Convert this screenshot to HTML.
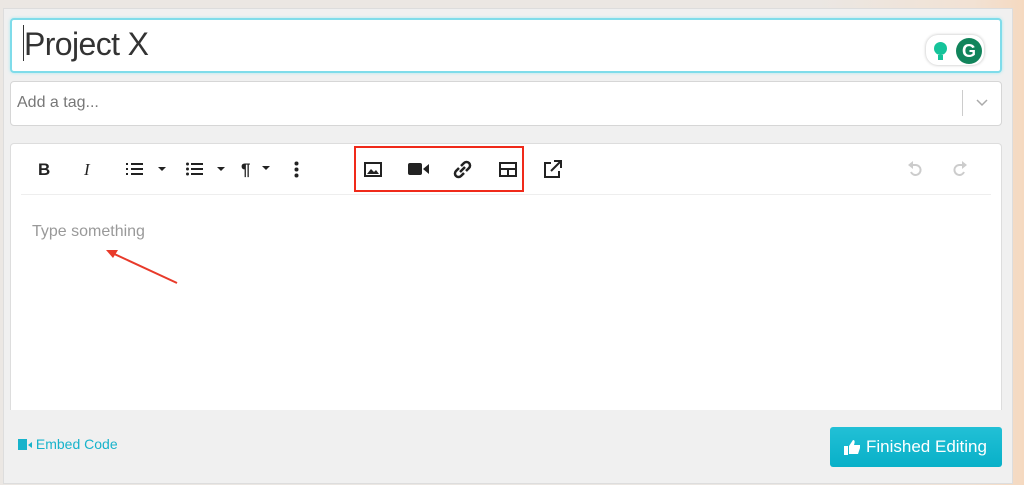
<!DOCTYPE html>
<html><head><style>
body{margin:0;width:1024px;height:485px;background:linear-gradient(90deg,#ebe7e3 0%,#ebe7e3 80%,#f2e2d4 95%,#f5d9c0 100%);font-family:"Liberation Sans",sans-serif;position:relative;overflow:hidden}
.panel{position:absolute;left:3px;top:8px;width:1008px;height:474px;background:#f0f0f0;border:1px solid #ddd}
.abs{position:absolute}
.title{left:10px;top:18px;width:988px;height:51px;background:#fff;border:2px solid #7fdcea;border-radius:4px;box-shadow:0 0 3px #a8e8f0}
.tag{left:10px;top:81px;width:990px;height:43px;background:#fff;border:1px solid #d6d6d6;border-radius:4px}
.ed{left:10px;top:143px;width:990px;height:266px;background:#fff;border:1px solid #ddd;border-bottom:none;border-radius:4px 4px 0 0}
.ic{position:absolute;top:160px;font-size:17px;color:#222}
.btn{left:830px;top:427px;width:172px;height:40px;background:linear-gradient(#22c0d6,#08b0c8);border-radius:3px;color:#fff;font-size:17px;line-height:40px}
</style></head><body>
<div class="panel"></div>
<div class="abs title"><div class="abs" style="left:11px;top:5px;width:1px;height:36px;background:#333"></div>
<div class="abs" style="left:12px;top:6px;font-size:32px;color:#333;letter-spacing:-0.6px">Project X</div>
<div class="abs" style="left:914px;top:15px;width:58px;height:30px;background:#fff;border-radius:12px;box-shadow:0 0 3px #bbb"></div>
<div class="abs" style="left:922px;top:22px;width:13px;height:13px;border-radius:50%;background:#15c39a"></div>
<div class="abs" style="left:926px;top:35px;width:5px;height:5px;background:#15c39a"></div>
<div class="abs" style="left:944px;top:18px;width:26px;height:26px;border-radius:50%;background:#11845b;color:#fff;font-weight:bold;font-size:18px;text-align:center;line-height:26px">G</div>
</div>
<div class="abs tag"><div class="abs" style="left:6px;top:12px;font-size:16px;color:#777">Add a tag...</div>
<div class="abs" style="left:951px;top:8px;width:1px;height:26px;background:#ccc"></div>
<svg class="abs" style="left:965px;top:17px" width="12" height="8"><path d="M1 1L6 6L11 1" fill="none" stroke="#aaa" stroke-width="1.5"/></svg></div>
<div class="abs ed"><div class="abs" style="left:10px;top:50px;width:970px;height:1px;background:#eee"></div>
<div class="abs" style="left:21px;top:79px;font-size:16px;color:#999">Type something</div></div>
<div class="ic" style="left:38px;font-weight:bold">B</div>
<div class="ic" style="left:84px;font-style:italic;font-family:'Liberation Serif'">I</div>
<svg class="abs" style="left:126px;top:162px" width="44" height="14"><g fill="#222"><rect x="0" y="1" width="2" height="2"/><rect x="0" y="6" width="2" height="2"/><rect x="0" y="11" width="2" height="2"/><rect x="5" y="1" width="12" height="2"/><rect x="5" y="6" width="12" height="2"/><rect x="5" y="11" width="12" height="2"/><path d="M32 5H40L36 9Z"/></g></svg>
<svg class="abs" style="left:186px;top:162px" width="44" height="14"><g fill="#222"><circle cx="1.5" cy="2" r="1.5"/><circle cx="1.5" cy="7" r="1.5"/><circle cx="1.5" cy="12" r="1.5"/><rect x="5" y="1" width="12" height="2"/><rect x="5" y="6" width="12" height="2"/><rect x="5" y="11" width="12" height="2"/><path d="M31 5H39L35 9Z"/></g></svg>
<div class="ic" style="left:241px;font-weight:bold">¶</div>
<svg class="abs" style="left:262px;top:166px" width="9" height="5"><path d="M0 0H8L4 4Z" fill="#222"/></svg>
<svg class="abs" style="left:294px;top:161px" width="5" height="17"><circle cx="2.5" cy="2.5" r="2" fill="#222"/><circle cx="2.5" cy="8.5" r="2" fill="#222"/><circle cx="2.5" cy="14.5" r="2" fill="#222"/></svg>
<div class="abs" style="left:354px;top:146px;width:166px;height:42px;border:2px solid #f02a1a"></div>
<svg class="abs" style="left:364px;top:162px" width="18" height="15"><rect x="1" y="1" width="16" height="13" fill="none" stroke="#222" stroke-width="2"/><path d="M3 12 L7 7 L10 10 L12 8 L15 12Z" fill="#222"/></svg>
<svg class="abs" style="left:408px;top:162px" width="22" height="14"><rect x="0" y="1" width="14" height="12" rx="2" fill="#222"/><path d="M15 7 L21 2 V12Z" fill="#222"/></svg>
<svg class="abs" style="left:453px;top:160px" width="19" height="19"><g fill="none" stroke="#222" stroke-width="2.5"><path d="M8 6L11 3A3 3 0 0 1 16 8L13 11"/><path d="M11 13L8 16A3 3 0 0 1 3 11L6 8"/><path d="M7 12L12 7"/></g></svg>
<svg class="abs" style="left:499px;top:162px" width="18" height="15"><rect x="1" y="1" width="16" height="13" fill="none" stroke="#222" stroke-width="2"/><path d="M1 7H17M9 7V14" stroke="#222" stroke-width="2"/></svg>
<svg class="abs" style="left:543px;top:160px" width="19" height="19"><path d="M8 3H2V17H16V11" fill="none" stroke="#222" stroke-width="2"/><path d="M11 1H18V8M18 1L8 11" fill="none" stroke="#222" stroke-width="2"/></svg>
<svg class="abs" style="left:907px;top:160px" width="16" height="18"><path d="M5 5H9A5 5 0 1 1 4 12" fill="none" stroke="#ccc" stroke-width="2"/><path d="M1 5L6 1V9Z" fill="#ccc"/></svg>
<svg class="abs" style="left:952px;top:160px" width="16" height="18"><path d="M11 5H7A5 5 0 1 0 12 12" fill="none" stroke="#ccc" stroke-width="2"/><path d="M15 5L10 1V9Z" fill="#ccc"/></svg>
<svg class="abs" style="left:100px;top:240px" width="82" height="48"><path d="M77 43 L10 12" stroke="#e83a2a" stroke-width="2"/><path d="M6 10 L18 10 L13 18Z" fill="#e83a2a"/></svg>
<div class="abs" style="left:18px;top:436px;color:#17b3cb;font-size:14px"><span style="display:inline-block;width:9px;height:11px;background:#17b3cb;vertical-align:-1px"></span><span style="display:inline-block;width:0;border:3px solid transparent;border-right:4px solid #17b3cb;margin-left:-2px;vertical-align:1px"></span> Embed Code</div>
<div class="abs btn"><svg class="abs" style="left:14px;top:12px" width="17" height="16"><rect x="0" y="7" width="4" height="9" fill="#fff"/><path d="M5 7L9 1C11 1 11 3 10 6H16V9L14 15H5Z" fill="#fff"/></svg><span class="abs" style="left:36px">Finished Editing</span></div>
</body></html>
